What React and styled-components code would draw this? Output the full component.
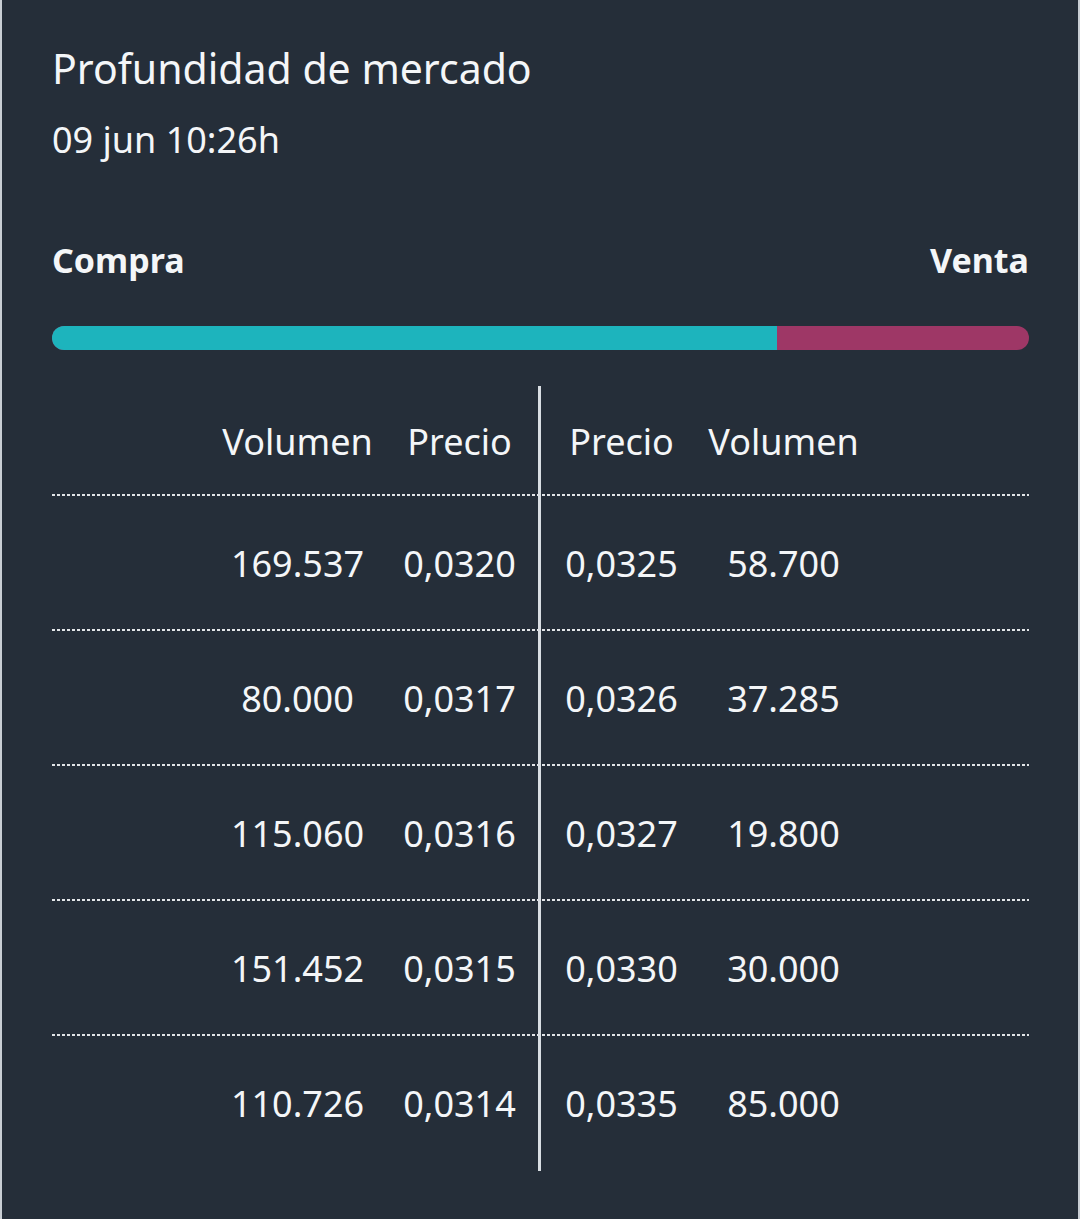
import styled, { createGlobalStyle } from 'styled-components';

const GlobalStyle = createGlobalStyle`
    html, body { margin: 0; padding: 0; background: #252e39; }
    body { font-family: 'Noto Sans', 'Open Sans', sans-serif; }
`;

const BUY_SHARE = 0.742;

const ROWS = [
    ['169.537', '0,0320', '0,0325', '58.700'],
    ['80.000', '0,0317', '0,0326', '37.285'],
    ['115.060', '0,0316', '0,0327', '19.800'],
    ['151.452', '0,0315', '0,0330', '30.000'],
    ['110.726', '0,0314', '0,0335', '85.000'],
];

const MarketDepth = () => (
    <Panel>
        <Title>Profundidad de mercado</Title>
        <Stamp>09 jun 10:26h</Stamp>

        <Sides>
            <Side>Compra</Side>
            <Side>Venta</Side>
        </Sides>

        <Bar>
            <BuyFill style={{ width: `${BUY_SHARE * 100}%` }} />
        </Bar>

        <Table>
            <Row $head>
                <Spacer />
                <Cell>Volumen</Cell>
                <Cell>Precio</Cell>
                <Cell $split>Precio</Cell>
                <Cell>Volumen</Cell>
                <Spacer />
            </Row>
            {ROWS.map((r, i) => (
                <Row key={i} $last={i === ROWS.length - 1}>
                    <Spacer />
                    <Cell>{r[0]}</Cell>
                    <Cell>{r[1]}</Cell>
                    <Cell $split>{r[2]}</Cell>
                    <Cell>{r[3]}</Cell>
                    <Spacer />
                </Row>
            ))}
        </Table>
    </Panel>
);

/* ── Styles ─────────────────────────────────── */
const Panel = styled.div`
    box-sizing: border-box;
    width: 1080px; min-height: 1219px;
    padding: 38px 49px 0 50px;
    background: #252e39;
    border-left: 2px solid #c9ced4;
    border-right: 2px solid #c9ced4;
    color: #f4f6f8;
`;
const Title = styled.div`
    font-size: 41px; line-height: 60px; font-weight: 400;
`;
const Stamp = styled.div`
    margin-top: 17px;
    font-size: 36px; line-height: 50px;
`;
const Sides = styled.div`
    display: flex; justify-content: space-between; align-items: center;
    margin-top: 70px;
`;
const Side = styled.div`
    font-size: 34px; line-height: 50px; font-weight: 700;
`;
const Bar = styled.div`
    display: flex;
    height: 24px; margin-top: 41px;
    border-radius: 12px; overflow: hidden;
    background: #9e3766;
`;
const BuyFill = styled.div`
    height: 100%; background: #1db4bd;
`;
const Table = styled.div`
    margin-top: 36px;
`;
const Row = styled.div`
    display: grid;
    grid-template-columns: 1fr 162px 162px 162px 162px 1fr;
    height: ${p => (p.$head ? 108 : 133)}px;
    padding-bottom: ${p => (p.$last ? 0 : 2)}px;
    background-image: ${p => (p.$last ? 'none'
        : 'repeating-linear-gradient(to right, #e2e5e8 0 3px, transparent 3px 5px)')};
    background-size: 100% 2px;
    background-repeat: no-repeat;
    background-position: bottom left;
`;
const Spacer = styled.div``;
const Cell = styled.div`
    display: flex; align-items: center; justify-content: center;
    font-size: 36px;
    border-left: ${p => (p.$split ? '3px solid #d9dee3' : 'none')};
    margin-left: ${p => (p.$split ? '-3px' : '0')};
    height: calc(100% + 2px);
`;

export default function App() {
    return (
        <>
            <GlobalStyle />
            <MarketDepth />
        </>
    );
}
